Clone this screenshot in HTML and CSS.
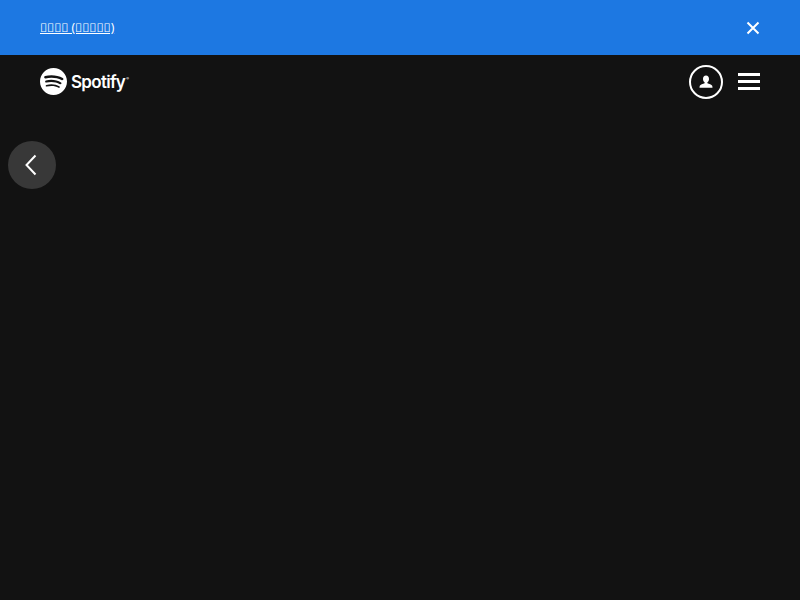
FILE: index.html
```html
<!DOCTYPE html>
<html lang="en">
<head>
<meta charset="utf-8">
<title>Spotify</title>
<link rel="stylesheet" href="styles.css">
</head>
<body>
<div class="banner">
  <a class="lang" href="#">&#xE000;&#xE001;&#xE002;&#xE003; (&#xF8F0;&#xF8F1;&#xF8F2;&#xF8F3;&#xF8F4;)</a>
  <button class="close" aria-label="Close">
    <svg width="14" height="14" viewBox="0 0 14 14"><path d="M1.5 1.5l11 11M12.500 1.500l-11 11" stroke="#fff" stroke-width="2" fill="none"/></svg>
  </button>
</div>
<header class="nav">
  <a class="brand" href="#">
    <svg class="brand-icon" width="27" height="27" viewBox="0 0 24 24"><path fill="#fff" d="M12 0C5.4 0 0 5.4 0 12s5.4 12 12 12 12-5.400 12-12S18.660 0 12 0zm5.521 17.340c-.240.359-.660.480-1.021.240-2.820-1.740-6.360-2.101-10.561-1.141-.418.122-.779-.179-.899-.539-.120-.421.180-.780.540-.900 4.560-1.021 8.520-.600 11.640 1.320.420.180.479.659.301 1.020zm1.440-3.300c-.301.420-.841.600-1.262.300-3.239-1.980-8.159-2.580-11.939-1.380-.479.120-1.020-.120-1.140-.600-.120-.480.120-1.021.600-1.141C9.600 9.900 15 10.561 18.720 12.840c.361.181.540.780.241 1.200zm.120-3.360C15.240 8.400 8.820 8.160 5.160 9.301c-.600.179-1.200-.181-1.380-.721-.180-.601.180-1.200.720-1.381 4.260-1.260 11.280-1.020 15.721 1.621.539.300.719 1.020.419 1.560-.299.421-1.020.599-1.559.300z"/></svg>
    <span class="wordmark">Spotify<sup class="reg">®</sup></span>
  </a>
  <div class="actions">
    <a class="profile" href="#" aria-label="Profile">
      <svg width="14" height="14" viewBox="0 0 14 14"><path fill="#fff" d="M7 0.500c-1.900 0-3 1.500-3 3.400 0 1.500.7 2.800 1.600 3.400v.9c-1.600.5-4.300 1.300-4.800 2.500-.2.500-.3 1.200-.3 2h13c0-.8-.1-1.500-.3-2-.5-1.200-3.200-2-4.800-2.500v-.9c.9-.6 1.600-1.900 1.600-3.400 0-1.900-1.100-3.400-3-3.400z"/></svg>
    </a>
    <button class="menu" aria-label="Menu"><span class="bar"></span><span class="bar"></span><span class="bar"></span></button>
  </div>
</header>
<button class="back" aria-label="Back">
  <svg width="14" height="22" viewBox="0 0 14 22"><path d="M10.500 1.500L1.500 11l9 9.500" stroke="#fff" stroke-width="2" fill="none"/></svg>
</button>
</body>
</html>
```
FILE: styles.css
```css
* { box-sizing: border-box; }
html, body { height: 100%; }
body {
  margin: 0;
  background: #121212;
  font-family: "Noto Sans", "Liberation Sans", sans-serif;
  color: #fff;
  overflow: hidden;
}
a { color: inherit; }
button { background: none; border: 0; padding: 0; color: inherit; display: flex; }
.banner {
  height: 55px;
  background: #1d78e2;
  display: flex;
  align-items: center;
  justify-content: space-between;
  padding: 0 40px;
}
.lang { font-size: 12px; letter-spacing: -0.08px; text-decoration: underline; }
.nav {
  height: 54px;
  display: flex;
  align-items: center;
  justify-content: space-between;
  padding: 0 40px;
}
.brand { display: flex; align-items: center; gap: 4px; text-decoration: none; margin-top: -1px; }
.wordmark { font-family: Inter, sans-serif; font-weight: 600; font-size: 17px; letter-spacing: -0.7px; line-height: 20px; }
.reg { font-size: 4px; letter-spacing: 0; vertical-align: 8px; line-height: 0; margin-left: 1px; }
.actions { display: flex; align-items: center; gap: 15px; }
.profile {
  width: 34px;
  height: 34px;
  border: 2px solid #fff;
  border-radius: 50%;
  display: flex;
  align-items: center;
  justify-content: center;
}
.menu { width: 22px; flex-direction: column; gap: 4px; margin-top: -1px; }
.bar { display: block; height: 3px; background: #fff; width: 100%; }
.back {
  position: absolute;
  left: 8px;
  top: 141px;
  width: 48px;
  height: 48px;
  border-radius: 50%;
  background: #383838;
  align-items: center;
  justify-content: center;
}
```
